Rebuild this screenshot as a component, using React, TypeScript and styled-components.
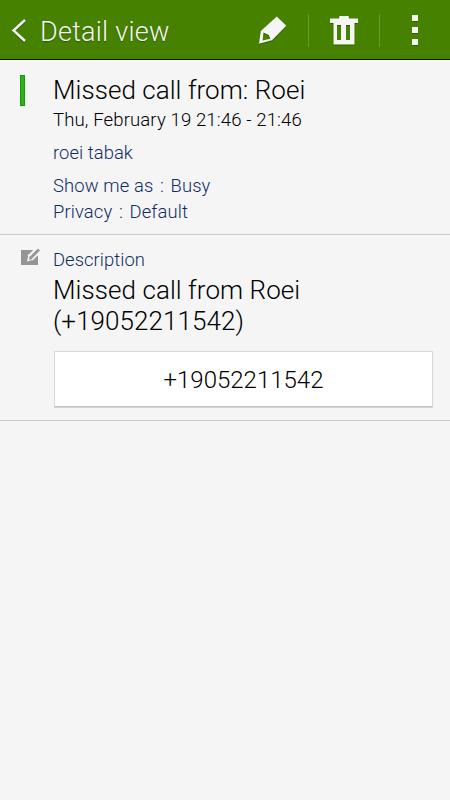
import React from "react";
import styled, { createGlobalStyle } from "styled-components";

const Global = createGlobalStyle`
  * { box-sizing: border-box; }
  body { margin: 0; background: #f5f5f5; font-family: Roboto, sans-serif; font-weight: 300; color: #000; }
`;
const Screen = styled.div`width: 450px; height: 800px; background: #f5f5f5; overflow: hidden;`;
const Bar = styled.header`
  height: 60px; display: flex; align-items: center; background: #468100;
  border-bottom: 1px solid #0d1c00; color: #f5f5f5; padding-left: 11px;
`;
const Title = styled.h1`
  margin: 5px 0 0 14px; flex: 1; font-size: 27px; line-height: 32px; font-weight: 300; letter-spacing: 0.24px;
  text-shadow: 0 1px 1px #2d5c00;
`;
const Action = styled.button`
  width: 70px; height: 59px; padding: 0; border: 0; background: none; color: #f5f5f5;
  display: flex; align-items: center; justify-content: center;
`;
const Glyph = styled.svg`filter: drop-shadow(0 1px 0 #2d5c00); flex: none; display: block;`;
const Divider = styled.div`width: 1px; height: 33px; background: #6b9a33; margin-top: 1px;`;
const Section = styled.section<{ $h: number }>`
  height: ${p => p.$h}px; border-bottom: 1px solid #cacaca; display: flex;
`;
const Gutter = styled.div<{ $top: number }>`width: 53px; padding: ${p => p.$top}px 0 0 20px; flex: none;`;
const Marker = styled.div`width: 5px; height: 31px; background: #35ad1a; border: 1px solid #0fa006;`;
const Body = styled.div`flex: 1; padding-right: 17px;`;
const Line = styled.p<{ $size: number; $lh: number; $top?: number; $c?: string; $ls?: number }>`
  margin: ${p => p.$top ?? 0}px 0 0; font-size: ${p => p.$size}px; line-height: ${p => p.$lh}px;
  color: ${p => p.$c ?? "#000"}; letter-spacing: ${p => p.$ls ?? 0}px; white-space: nowrap;
`;
const Colon = styled.span`margin: 0 2px;`;
const Phone = styled.button`
  display: block; width: 379px; height: 56px; margin: 14px 0 0 1px; background: #fff; border: 1px solid #d8d8d8;
  border-bottom-color: #c4c4c4; box-shadow: 0 1px 0 #d2d2d2; border-radius: 1px;
  font: 300 24px/28px Roboto, sans-serif; color: #000; padding: 2px 0 0;
`;
const navy = "#0f2d63";

export default function App() {
  return (
    <Screen>
      <Global />
      <Bar>
        <Glyph width="15" height="24" viewBox="0 0 15 24" fill="none" stroke="#f5f5f5" strokeWidth="2.4"><path d="M14 2 2.500 12.500 14 23" /></Glyph>
        <Title>Detail view</Title>
        <Action aria-label="Edit">
          <Glyph width="28" height="30" viewBox="259 15 28 30" fill="#f5f5f5" fillRule="evenodd"><path d="M259 43.800 260.800 31 276.800 16.500 286.300 25.700 272 40.300ZM263.500 32.500 262.600 40.500 270.400 38.800 268.700 35Z" /></Glyph>
        </Action>
        <Divider />
        <Action aria-label="Delete">
          <Glyph width="28" height="30" viewBox="330 15 28 30" fill="#f5f5f5" fillRule="evenodd"><path d="M330 18.500h9l.5-2.500h9l.5 2.500h9v4.500h-3.500v21.500h-21V23H330ZM337 25v15h4V25ZM346 25v15h4V25Z" /></Glyph>
        </Action>
        <Divider />
        <Action aria-label="More">
          <Glyph width="6" height="30" fill="#f5f5f5"><path d="M0 0h6v6H0zM0 12h6v6H0zM0 24h6v6H0z" /></Glyph>
        </Action>
      </Bar>
      <Section $h={175}>
        <Gutter $top={15}><Marker /></Gutter>
        <Body>
          <Line $size={26} $lh={32} $top={14} $ls={0.05}>Missed call from: Roei</Line>
          <Line $size={18.6} $lh={24} $top={2} $ls={0.1}>Thu, February 19 21:46 - 21:46</Line>
          <Line $size={18.4} $lh={24} $top={9} $c={navy} $ls={0.06}>roei tabak</Line>
          <Line $size={18.4} $lh={25} $top={8} $c={navy} $ls={0.12}>Show me as <Colon>:</Colon> Busy</Line>
          <Line $size={18.4} $lh={25} $top={1} $c={navy} $ls={0.12}>Privacy <Colon>:</Colon> Default</Line>
        </Body>
      </Section>
      <Section $h={186}>
        <Gutter $top={13}>
          <svg width="21" height="18" viewBox="0 0 21 18">
            <path fill="#959595" d="M1 2h17v15H1z" />
            <path stroke="#f5f5f5" strokeWidth="7" d="m10 10 9-8.500" />
            <path fill="#f5f5f5" d="m8.500 6-1.500 7.500 7-2z" />
            <path stroke="#959595" strokeWidth="2.8" d="m11 9.500 8-8" />
            <path fill="#959595" d="m9.700 8-.7 3.700 3.600-.8z" />
          </svg>
        </Gutter>
        <Body>
          <Line $size={18.4} $lh={24} $top={13} $c={navy} $ls={0.06}>Description</Line>
          <Line $size={26} $lh={31} $top={3} $ls={0.07}>Missed call from Roei<br />(+19052211542)</Line>
          <Phone>+19052211542</Phone>
        </Body>
      </Section>
    </Screen>
  );
}
